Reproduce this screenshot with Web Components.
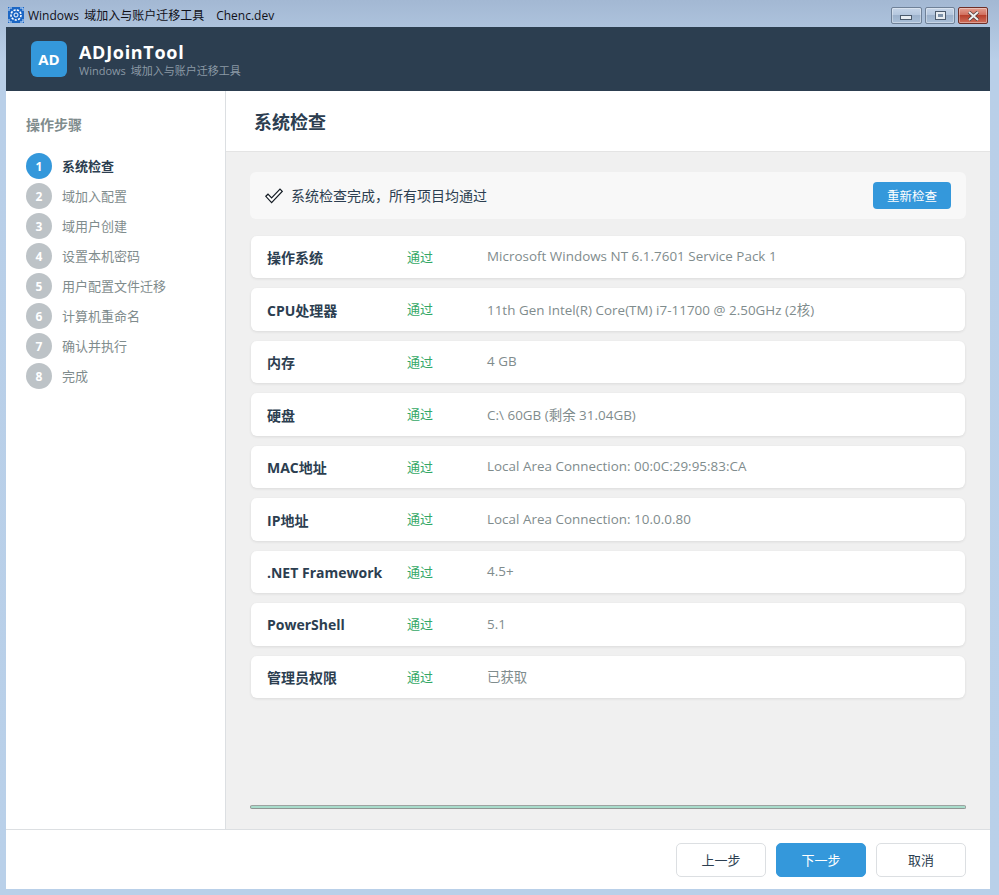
<!DOCTYPE html>
<html lang="zh">
<head>
<meta charset="utf-8">
<title>ADJoinTool</title>
<style>
  html, body { margin: 0; height: 100%; }
  body {
    width: 999px; height: 895px; overflow: hidden;
    font-family: "Open Sans", "Noto Sans CJK SC", sans-serif;
    color: #2c3e50;
  }
</style>
</head>
<body>
<win-frame title-text="Windows 域加入与账户迁移工具" sub-text="Chenc.dev">
  <app-header></app-header>
  <div slot="side">
    <step-list heading="操作步骤">
      <step-item num="1" active>系统检查</step-item>
      <step-item num="2">域加入配置</step-item>
      <step-item num="3">域用户创建</step-item>
      <step-item num="4">设置本机密码</step-item>
      <step-item num="5">用户配置文件迁移</step-item>
      <step-item num="6">计算机重命名</step-item>
      <step-item num="7">确认并执行</step-item>
      <step-item num="8">完成</step-item>
    </step-list>
  </div>
  <check-page slot="main" heading="系统检查">
    <check-summary>系统检查完成，所有项目均通过</check-summary>
    <check-row name="操作系统" value="Microsoft Windows NT 6.1.7601 Service Pack 1"></check-row>
    <check-row name="CPU处理器" value="11th Gen Intel(R) Core(TM) i7-11700 @ 2.50GHz (2核)"></check-row>
    <check-row name="内存" value="4 GB"></check-row>
    <check-row name="硬盘" value="C:\ 60GB (剩余 31.04GB)"></check-row>
    <check-row name="MAC地址" value="Local Area Connection: 00:0C:29:95:83:CA"></check-row>
    <check-row name="IP地址" value="Local Area Connection: 10.0.0.80"></check-row>
    <check-row name=".NET Framework" value="4.5+"></check-row>
    <check-row name="PowerShell" value="5.1"></check-row>
    <check-row name="管理员权限" value="已获取"></check-row>
  </check-page>
  <app-footer slot="foot"></app-footer>
</win-frame>

<script>
class WinFrame extends HTMLElement {
  constructor() {
    super();
    this.attachShadow({ mode: "open" });
    this.shadowRoot.innerHTML = `
      <style>
        :host {
          display: flex; flex-direction: column;
          width: 999px; height: 895px; box-sizing: border-box;
          padding: 0 9px 6px 6px;
          background: linear-gradient(#a3b8d3 0, #b9cfe8 60px, #b9d0e9 100%);
        }
        .bar {
          height: 27px; flex: none; display: flex; align-items: center;
          margin-left: 2px; margin-right: 2px;
          font: 12px "Open Sans", "Noto Sans CJK SC", sans-serif; color: #101018;
        }
        .ico { width: 16px; height: 16px; margin-right: 4px; margin-top: 3px; flex: none; display: block; }
        .txt { margin-top: 3px; white-space: pre; word-spacing: 2px; }
        .sub { margin-left: 12px; }
        .btns { margin-left: auto; display: flex; gap: 3px; margin-top: 4px; }
        .btn {
          width: 28px; height: 15px; border: 1px solid #6f8198; border-radius: 2px;
          display: flex; align-items: center; justify-content: center;
          background: linear-gradient(#c6d5e8 0, #b5c7de 45%, #9db2cc 50%, #a9bfd8 100%);
          box-shadow: inset 0 0 0 1px rgba(255,255,255,.35);
        }
        .btn.first { width: 29px; }
        .close {
          border-color: #6e2f28;
          background: linear-gradient(#e2a092 0, #d2705f 45%, #b8402c 50%, #cf6f5c 100%);
        }
        .client { flex: 1; min-height: 0; display: flex; flex-direction: column; background: #fff; }
        .mid { flex: 1; min-height: 0; display: flex; }
        .side { width: 219px; flex: none; background: #fff; border-right: 1px solid #dcdfe2; }
        .main { flex: 1; min-width: 0; background: #f0f0f0; }
        svg { display: block; }
      </style>
      <div class="bar">
        <svg class="ico" viewBox="0 0 16 16">
          <rect width="16" height="16" fill="#1b66c4"/>
          <circle cx="8" cy="8" r="5" fill="none" stroke="#fff" stroke-width="1.6" stroke-dasharray="2.2 1.2"/>
          <circle cx="8" cy="8" r="2" fill="#1b66c4" stroke="#fff" stroke-width="1"/>
          <path d="M1 1h3M12 1h3M1 15h3M12 15h3M1 1v3M15 1v3M1 12v3M15 12v3" stroke="#cfe3fb" stroke-width="1" fill="none"/>
        </svg>
        <span class="txt"></span><span class="txt sub"></span>
        <div class="btns">
          <div class="btn first"><svg width="13" height="6" viewBox="0 0 13 6" style="margin-top:4px"><rect x=".5" y=".5" width="11" height="4" fill="#e8edf2" stroke="#4b5a6c"/></svg></div>
          <div class="btn"><svg width="11" height="9" viewBox="0 0 11 9"><rect x=".5" y=".5" width="10" height="8" fill="#e8edf2" stroke="#4b5a6c"/><rect x="3" y="3" width="5" height="3" fill="#7f93aa"/></svg></div>
          <div class="btn close"><svg width="13" height="10" viewBox="0 0 13 10"><path d="M2 1l9 8M11 1L2 9" stroke="#4d3a38" stroke-width="3.4"/><path d="M2 1l9 8M11 1L2 9" stroke="#f0f0f0" stroke-width="2"/></svg></div>
        </div>
      </div>
      <div class="client">
        <slot></slot>
        <div class="mid">
          <div class="side"><slot name="side"></slot></div>
          <div class="main"><slot name="main"></slot></div>
        </div>
        <slot name="foot"></slot>
      </div>`;
  }
  connectedCallback() {
    const t = this.shadowRoot.querySelectorAll(".txt");
    t[0].textContent = this.getAttribute("title-text");
    t[1].textContent = this.getAttribute("sub-text");
  }
}

class AppHeader extends HTMLElement {
  constructor() {
    super();
    this.attachShadow({ mode: "open" });
    this.shadowRoot.innerHTML = `
      <style>
        :host {
          display: flex; align-items: center; gap: 12px; flex: none;
          height: 64px; box-sizing: border-box; padding-left: 25px;
          background: #2c3e50; color: #fff;
        }
        .logo {
          width: 36px; height: 36px; border-radius: 6px; background: #3498db;
          display: flex; align-items: center; justify-content: center;
          font-size: 15px; font-weight: 700;
        }
        .name { font-size: 18px; font-weight: 700; line-height: 22px; letter-spacing: .7px; }
        .desc { font-size: 11px; line-height: 15px; color: #8b99a5; word-spacing: 2px; }
      </style>
      <div class="logo">AD</div>
      <div>
        <div class="name">ADJoinTool</div>
        <div class="desc">Windows 域加入与账户迁移工具</div>
      </div>`;
  }
}

class StepList extends HTMLElement {
  constructor() {
    super();
    this.attachShadow({ mode: "open" });
    this.shadowRoot.innerHTML = `
      <style>
        :host { display: block; padding: 25px 20px 0; }
        h2 { margin: 0 0 19px; font-size: 14px; line-height: 18px; font-weight: 700; color: #7f8c8d; }
        .list { display: flex; flex-direction: column; gap: 4px; }
      </style>
      <h2></h2>
      <div class="list"><slot></slot></div>`;
  }
  connectedCallback() {
    this.shadowRoot.querySelector("h2").textContent = this.getAttribute("heading");
  }
}

class StepItem extends HTMLElement {
  constructor() {
    super();
    this.attachShadow({ mode: "open" });
    this.shadowRoot.innerHTML = `
      <style>
        :host { display: flex; align-items: center; gap: 10px; height: 26px; font-size: 13px; color: #7f8c8d; }
        .n {
          width: 26px; height: 26px; border-radius: 50%; background: #bdc3c7; color: #fff;
          display: flex; align-items: center; justify-content: center;
          font-size: 12px; font-weight: 700; flex: none;
        }
        .t { padding-bottom: 2px; }
        :host([active]) { color: #2c3e50; font-weight: 700; }
        :host([active]) .n { background: #3498db; }
      </style>
      <span class="n"></span><span class="t"><slot></slot></span>`;
  }
  connectedCallback() {
    this.shadowRoot.querySelector(".n").textContent = this.getAttribute("num");
  }
}

class CheckPage extends HTMLElement {
  constructor() {
    super();
    this.attachShadow({ mode: "open" });
    this.shadowRoot.innerHTML = `
      <style>
        :host { display: flex; flex-direction: column; height: 100%; position: relative; }
        .head {
          height: 60px; flex: none; box-sizing: content-box; background: #fff;
          border-bottom: 1px solid #e4e4e4;
          display: flex; align-items: center; padding-left: 28px;
        }
        h1 { margin: 0; font-size: 18px; font-weight: 700; color: #2c3e50; }
        .body { flex: 1; min-height: 0; padding: 20px 24px 0; display: flex; flex-direction: column; }
        .rows { display: flex; flex-direction: column; gap: 10px; }
        .progress {
          margin-top: auto; margin-bottom: 20px; height: 4px; box-sizing: border-box;
          border-radius: 2px; border: 1px solid #8f9694; border-top-color: #9da3a1;
          background: #a9dccb;
        }
      </style>
      <div class="head"><h1></h1></div>
      <div class="body">
        <slot name="summary"></slot>
        <div class="rows"><slot></slot></div>
        <div class="progress"></div>
      </div>`;
  }
  connectedCallback() {
    this.shadowRoot.querySelector("h1").textContent = this.getAttribute("heading");
    const s = this.querySelector("check-summary");
    if (s) s.slot = "summary";
  }
}

class CheckSummary extends HTMLElement {
  constructor() {
    super();
    this.attachShadow({ mode: "open" });
    this.shadowRoot.innerHTML = `
      <style>
        :host {
          display: flex; align-items: center; height: 47px; margin-bottom: 16.8px;
          box-sizing: border-box; padding: 0 15px; border-radius: 6px;
          background: #f8f8f8; font-size: 14px; color: #2c3e50;
        }
        svg { margin: 0 8px 0 0; flex: none; display: block; }
        .m { padding-bottom: 1px; }
        button {
          margin-left: auto; width: 78px; height: 27px; border: 0; border-radius: 4px; padding: 0;
          background: #3498db; color: #fff; font: inherit; font-size: 12.5px;
        }
      </style>
      <svg width="18" height="16" viewBox="0 0 18 16">
        <path d="M.8 8.3 3 6.2 6.6 9.8 15 1.2 17.2 3.4 6.6 14.6Z" fill="#fff" stroke="#141c24" stroke-width="1.2"/>
      </svg>
      <span class="m"><slot></slot></span>
      <button>重新检查</button>`;
  }
}

class CheckRow extends HTMLElement {
  constructor() {
    super();
    this.attachShadow({ mode: "open" });
    this.shadowRoot.innerHTML = `
      <style>
        :host {
          display: flex; align-items: center; height: 42.5px; margin: 0 1px;
          box-sizing: border-box; padding: 0 16px; border-radius: 6px;
          background: #fff; box-shadow: 0 1px 3px rgba(0,0,0,.09);
          font-size: 13px;
        }
        .k { width: 140px; flex: none; font-weight: 700; color: #2c3e50; font-size: 14px; white-space: nowrap; }
        .s { width: 80px; flex: none; color: #34a866; font-size: 13px; padding-bottom: 2px; }
        .v { color: #7f8c8d; white-space: nowrap; font-size: 13.4px; letter-spacing: .03px; padding-bottom: 2px; }
      </style>
      <span class="k"></span><span class="s">通过</span><span class="v"></span>`;
  }
  connectedCallback() {
    this.shadowRoot.querySelector(".k").textContent = this.getAttribute("name");
    this.shadowRoot.querySelector(".v").textContent = this.getAttribute("value");
  }
}

class AppFooter extends HTMLElement {
  constructor() {
    super();
    this.attachShadow({ mode: "open" });
    this.shadowRoot.innerHTML = `
      <style>
        :host {
          display: flex; justify-content: flex-end; align-items: center; gap: 10px; flex: none;
          height: 60px; box-sizing: border-box; padding-right: 24px;
          background: #fff; border-top: 1px solid #dcdfe2;
        }
        button {
          width: 90px; height: 34px; box-sizing: border-box; padding: 0;
          border: 1px solid #dcdfe2; border-radius: 5px; background: #fff; color: #2c3e50;
          font: 13px "Open Sans", "Noto Sans CJK SC", sans-serif;
        }
        .primary { background: #3498db; border-color: #3498db; color: #fff; }
      </style>
      <button>上一步</button><button class="primary">下一步</button><button>取消</button>`;
  }
}

customElements.define("win-frame", WinFrame);
customElements.define("app-header", AppHeader);
customElements.define("step-list", StepList);
customElements.define("step-item", StepItem);
customElements.define("check-page", CheckPage);
customElements.define("check-summary", CheckSummary);
customElements.define("check-row", CheckRow);
customElements.define("app-footer", AppFooter);
</script>
</body>
</html>
